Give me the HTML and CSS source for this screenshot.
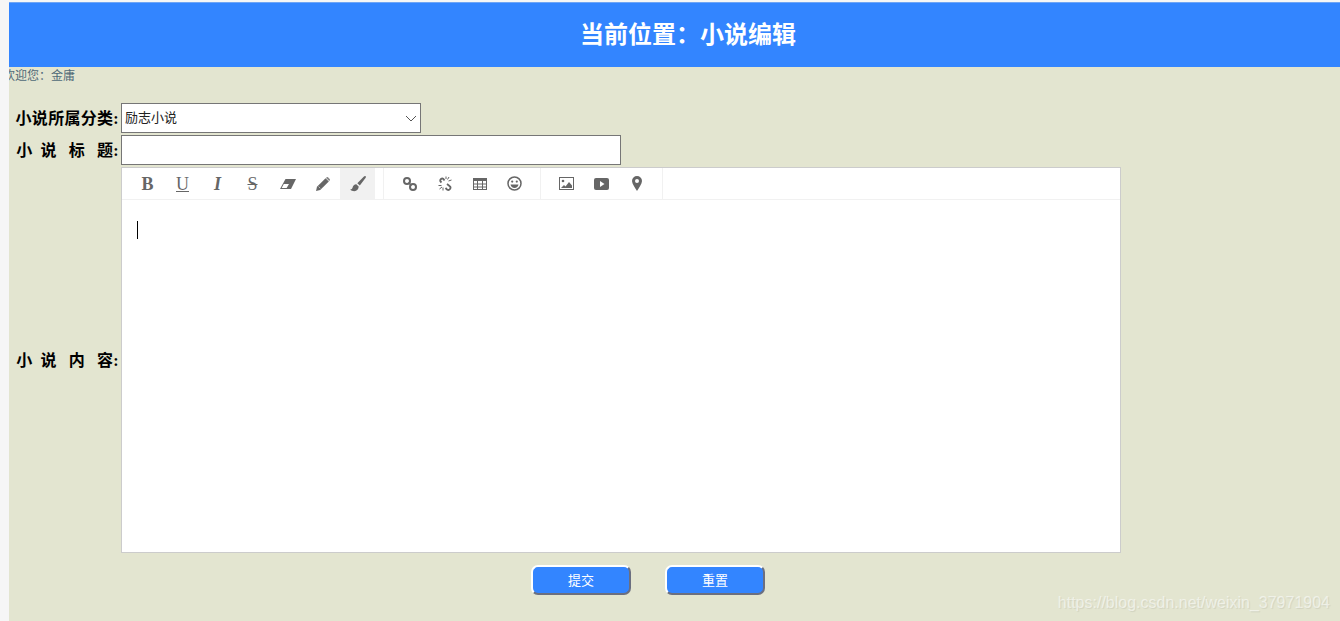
FILE: index.html
```html
<!DOCTYPE html>
<html>
<head>
  <meta charset="utf-8">
  <title>小说编辑</title>
  <link rel="stylesheet" href="styles.css">
</head>
<body>

  <div class="page">
    <div class="header">当前位置：小说编辑</div>
    <div class="welcome">欢迎您：金庸</div>

    <form class="novel-form">
      <label class="field-label">小说所属分类:</label>
      <div class="select-box">
        <span>励志小说</span>
        <svg class="arrow" width="12" height="7" viewBox="0 0 12 7"><path d="M1 1l5 5 5-5" fill="none" stroke="#555" stroke-width="1"/></svg>
      </div>

      <label class="field-label">小&nbsp;&nbsp;说&nbsp;&nbsp;&nbsp;标&nbsp;&nbsp;&nbsp;题:</label>
      <div class="title-input"></div>

      <label class="field-label">小&nbsp;&nbsp;说&nbsp;&nbsp;&nbsp;内&nbsp;&nbsp;&nbsp;容:</label>
      <div class="editor">
        <div class="toolbar">
          <div class="tool-group">
            <span class="tool text-tool bold">B</span>
            <span class="tool text-tool under">U</span>
            <span class="tool text-tool italic">I</span>
            <span class="tool text-tool strike">S</span>
            <span class="tool">
              <svg width="16" height="12" viewBox="0 0 16 12"><path d="M5.500 1H16l-5 10H0z" fill="#666"/><path d="M3.800 6H9l-2.400 4H1.700z" fill="#fff"/></svg>
            </span>
            <span class="tool">
              <svg width="14" height="14" viewBox="0 0 14 14"><path d="M0 14l1-4.200L9.600 1.200l3.200 3.200L4.200 13z" fill="#666"/><path d="M10.600.3a1 1 0 0 1 1.400 0l1.700 1.700a1 1 0 0 1 0 1.400l-.6.6-3.100-3.100z" fill="#888"/><path d="M2.500 9.500l1.800 1.800" stroke="#ccc" stroke-width=".8"/></svg>
            </span>
            <span class="tool active">
              <svg width="16" height="16" viewBox="0 0 16 16"><path d="M15.600.3c.5.400.3 1.100-.1 1.700L9.800 9.600 7.300 7.300 13.700.8c.6-.6 1.400-.9 1.900-.5z" fill="#666"/><path d="M6.300 8.300l2.400 2.300c.1 2.600-1.800 4.600-4.500 4.600-1.500 0-3.100-.5-4-1.600 1.400 0 2.100-.7 2.400-2 .3-2 2-3.400 3.700-3.300z" fill="#666"/></svg>
            </span>
          </div>
          <div class="tool-group">
            <span class="tool">
              <svg width="14" height="14" viewBox="0 0 14 14" fill="none" stroke="#666" stroke-width="2"><circle cx="4" cy="4" r="3"/><circle cx="10" cy="10" r="3"/><path d="M5.500 5.500l3 3" stroke-width="1.500"/></svg>
            </span>
            <span class="tool">
              <svg width="14" height="15" viewBox="0 0 14 15" fill="none" stroke="#666"><path d="M6.500 4.500L5.500 3a2 2 0 0 0-3 2.500l1 1M9 8l2.500 2a2 2 0 0 1-2.500 3.500L7.500 12" stroke-width="1.800"/><path d="M8 .5v2.500M11 1L9.500 3.500M13.500 4l-3 1M.5 9.500h3M1.500 13l2.500-2M5 11.500v3" stroke-width="1"/></svg>
            </span>
            <span class="tool">
              <svg width="14" height="12" viewBox="0 0 14 12"><rect x=".5" y=".5" width="13" height="11" fill="#fff" stroke="#666"/><rect x="0" y="0" width="14" height="3" fill="#666"/><path d="M0 6h14M0 9h14M4.500 3v9M9.500 3v9" stroke="#666"/></svg>
            </span>
            <span class="tool">
              <svg width="15" height="15" viewBox="0 0 15 15"><circle cx="7.500" cy="7.500" r="6.500" fill="none" stroke="#666" stroke-width="1.500"/><circle cx="5.200" cy="5.600" r="1.100" fill="#666"/><circle cx="9.800" cy="5.600" r="1.100" fill="#666"/><path d="M3.500 8.500h8c-.3 2.200-2 3.500-4 3.500s-3.700-1.300-4-3.500z" fill="#666"/></svg>
            </span>
          </div>
          <div class="tool-group">
            <span class="tool">
              <svg width="15" height="13" viewBox="0 0 15 13"><rect x=".5" y=".5" width="14" height="12" fill="#fff" stroke="#666"/><circle cx="4" cy="4" r="1.300" fill="#666"/><path d="M2 11l3-3 1.500 1.500L10 5l3 3.500V11z" fill="#666"/></svg>
            </span>
            <span class="tool">
              <svg width="15" height="12" viewBox="0 0 15 12"><rect width="15" height="12" rx="2" fill="#666"/><path d="M6 3l4.500 3L6 9z" fill="#fff"/></svg>
            </span>
            <span class="tool">
              <svg width="10" height="15" viewBox="0 0 10 15"><path fill-rule="evenodd" d="M5 0a5 5 0 0 1 5 5c0 3-3 6.500-5 10C3 11.500 0 8 0 5a5 5 0 0 1 5-5zm0 3a2 2 0 1 0 0 4 2 2 0 0 0 0-4z" fill="#666"/></svg>
            </span>
          </div>
        </div>
        <div class="editor-body"><span class="caret"></span></div>
      </div>

      <div class="buttons">
        <button type="button" class="btn">提交</button>
        <button type="button" class="btn">重置</button>
      </div>
    </form>
  </div>

  <div class="watermark">https://blog.csdn.net/weixin_37971904</div>

</body>
</html>
```

FILE: styles.css
```css
html,
body {
  height: 100%;
}

body {
  margin: 0;
  padding: 2px 0 0 9px;
  box-sizing: border-box;
  background-color: #f6f6f6;
  font-family: "Liberation Serif", "Noto Sans CJK SC", serif;
  overflow: hidden;
  position: relative;
}

.page {
  height: 100%;
  background-color: #e3e5d0;
  overflow: hidden;
}

.header {
  height: 65px;
  line-height: 64px;
  box-sizing: border-box;
  background-color: #3385ff;
  border-top: 1px solid #6fa5f5;
  color: white;
  font-size: 24px;
  font-weight: bold;
  text-align: center;
  padding-left: 27px;
}

.welcome {
  height: 16px;
  line-height: 18px;
  margin-left: -6px;
  font-family: "Liberation Sans", "Noto Sans CJK SC", sans-serif;
  font-size: 12px;
  color: #506a78;
}

.novel-form {
  display: grid;
  grid-template-columns: 110px 1000px;
  column-gap: 2px;
  row-gap: 2px;
  align-items: center;
  justify-items: start;
  margin-top: 20px;
}

.field-label {
  justify-self: end;
  padding-bottom: 2px;
  font-size: 16px;
  font-weight: bold;
  letter-spacing: 0.3px;
  word-spacing: -0.3px;
  color: black;
  white-space: nowrap;
}

.select-box {
  width: 300px;
  height: 30px;
  box-sizing: border-box;
  border: 1px solid #767676;
  background-color: white;
  display: flex;
  align-items: center;
  justify-content: space-between;
  padding: 0 3px 3px 3px;
  font-family: "Liberation Sans", "Noto Sans CJK SC", sans-serif;
  font-size: 13px;
  color: #222;
}

.arrow {
  margin-top: 3px;
}

.title-input {
  width: 500px;
  height: 30px;
  box-sizing: border-box;
  border: 1px solid #767676;
  background-color: white;
}

.editor {
  width: 1000px;
  height: 386px;
  box-sizing: border-box;
  border: 1px solid #ccc;
  background-color: white;
  display: flex;
  flex-direction: column;
}

.toolbar {
  display: flex;
  height: 32px;
  box-sizing: border-box;
  flex-shrink: 0;
  border-bottom: 1px solid #f1f1f1;
}

.tool-group {
  display: flex;
  padding: 0 8px;
  border-right: 1px solid #f1f1f1;
}

.tool {
  width: 35px;
  display: flex;
  align-items: center;
  justify-content: center;
}

.tool.active {
  background-color: #f1f1f1;
}

.text-tool {
  padding-top: 1px;
  font-family: "Liberation Serif", serif;
  font-size: 18px;
  color: #666;
}

.bold {
  font-weight: bold;
}

.under {
  text-decoration: underline;
}

.italic {
  font-style: italic;
  font-weight: bold;
}

.strike {
  text-decoration: line-through;
}

.editor-body {
  flex: 1;
  padding: 21px 15px;
}

.caret {
  display: block;
  width: 1px;
  height: 18px;
  background-color: black;
}

.buttons {
  grid-column: 1 / 3;
  justify-self: start;
  display: flex;
  gap: 34px;
  margin: 10px 0 0 522px;
}

.btn {
  width: 100px;
  height: 30px;
  box-sizing: border-box;
  background-color: #3385ff;
  color: white;
  font-family: "Liberation Sans", "Noto Sans CJK SC", sans-serif;
  font-size: 13px;
  border-style: solid;
  border-width: 2px;
  border-color: white #6b6f80 #6b6f80 white;
  border-radius: 7px;
  padding: 0 0 2px 0;
}

.watermark {
  position: absolute;
  right: 10px;
  bottom: 9px;
  font-family: "Liberation Sans", sans-serif;
  font-size: 16px;
  color: rgba(255, 255, 255, 0.55);
  text-shadow: 1px 1px 1px rgba(0, 0, 0, 0.08);
}
```
